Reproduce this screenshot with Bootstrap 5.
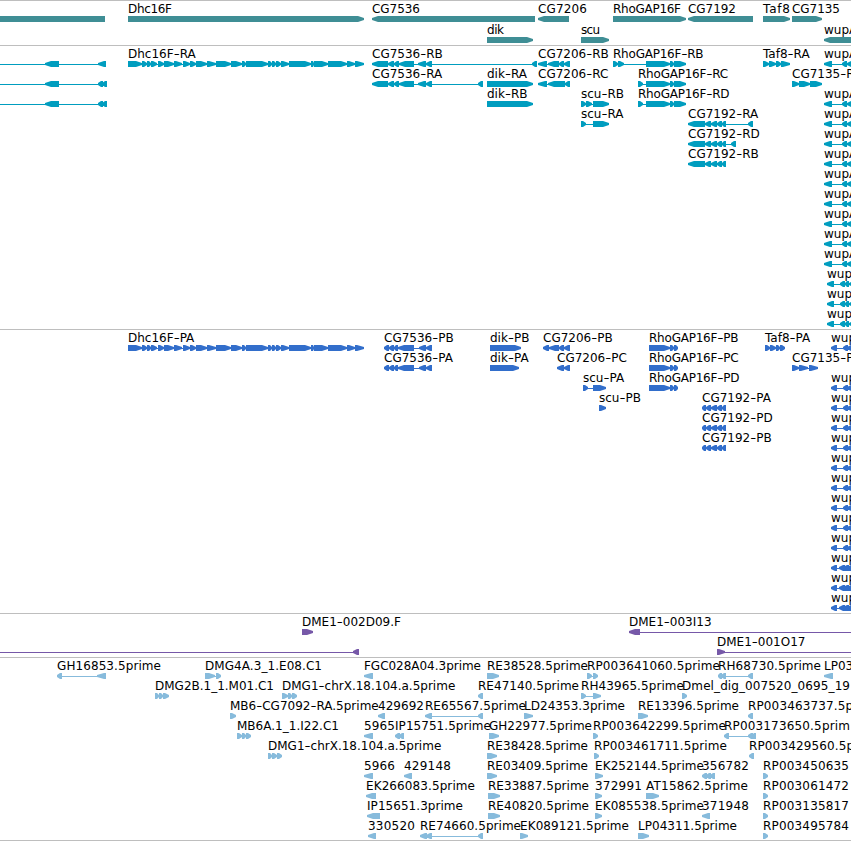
<!DOCTYPE html>
<html lang="en">
<head>
<meta charset="utf-8">
<meta name="viewport" content="width=device-width, initial-scale=1">
<title>Genome browser: region around Dhc16F</title>
<link href="https://cdn.jsdelivr.net/npm/bootstrap@5.3.0/dist/css/bootstrap.min.css" rel="stylesheet">
<style>
  body { background: #fff; }
  .browser { width: 851px; height: 841px; border-bottom: 1px solid #bebebe; }
  .track { border-top: 1px solid #bebebe; }
  .track svg { width: 851px; height: 100%; }
  .track text { font: 12px "DejaVu Sans", sans-serif; fill: #000; }
  .t-gene { height: 45px; color: #3f8e95; }
  .t-rna { height: 284px; color: #009dbf; }
  .t-cds { height: 284px; color: #326ecb; }
  .t-bac { height: 44px; color: #7658a8; }
  .t-est { height: 183px; color: #87bbdc; }
</style>
</head>
<body>
<main class="browser d-flex flex-column overflow-hidden">
  <section class="track t-gene flex-shrink-0" data-track="gene" data-pitch="21"></section>
  <section class="track t-rna flex-shrink-0" data-track="rna" data-pitch="20"></section>
  <section class="track t-cds flex-shrink-0" data-track="cds" data-pitch="20"></section>
  <section class="track t-bac flex-shrink-0" data-track="bac" data-pitch="20"></section>
  <section class="track t-est flex-shrink-0" data-track="est" data-pitch="20"></section>
</main>
<script src="https://cdn.jsdelivr.net/npm/bootstrap@5.3.0/dist/js/bootstrap.bundle.min.js"></script>
<script>
// One feature per line: row | strand | label | label width | blocks (start-end, "~" marks a plain block)
const dhc = '128-142 142-147 147-151 151-157 158-164 164-174 174-182 183-190 190-196 196-207 207-216 216-231 231-242 242-246 246-268 268-272 272-276 276-281 281-289 289-311 311-314 314-328 328-347 347-355 355-364';
const c75 = '372-388 388-394 394-399 399-414 418-426 426-432';
const rho = '646-670 670-674 674-686';
const c71 = '688-705 705-711 711-717 717-722 722-726';
const p75 = '384-389 389-394 394-398 398-414 419-426 426-432';
const p71 = '702-706 706-711 711-717 717-722 722-726';
const tracks = {
gene: `0|<||0|-20~105
0|>|Dhc16F|44|128-364
0|<|CG7536|48|372~535
0|<|CG7206|49|538-569
0|>|RhoGAP16F|68|613-686
0|<|CG7192|48|688-753
0|>|Taf8|27|763-790
0|>|CG7135|48|792-822
1|>|dik|17|487-533
1|>|scu|19|581-609
1|<|wupA1|0|824-870`,
rna: `0|<||0|-20-0 45-59 98-106
1|<||0|-20-0 45-59 98-103 102-107
2|<||0|-20-0 45-59 98-103 102-107
0|>|Dhc16F-RA|68|${dhc}
0|<|CG7536-RB|71|${c75} 532-537
1|<|CG7536-RA|73|${c75} 478-483
1|>|dik-RA|42|487-533
2|>|dik-RB|40|487-533
0|<|CG7206-RB|71|538-547 548-559 559-564 564-570
1|<|CG7206-RC|72|538-547 548-565 565-570
2|>|scu-RB|41|581-586 586-592 593-609
3|>|scu-RA|43|581-586 593-609
0|>|RhoGAP16F-RB|90|613-618 618-624 ${rho}
1|>|RhoGAP16F-RC|91|638-643 ${rho}
2|>|RhoGAP16F-RD|92|638-643 ${rho}
3|<|CG7192-RA|73|${c71} 748-753
4|<|CG7192-RD|73|${c71} 731-736
5|<|CG7192-RB|71|${c71}
0|>|Taf8-RA|51|763-769 769-776 776-781 781-790
1|>|CG7135-RA|0|792-799 799-810 810-822
${[0,2,3,4,5,6,7,8,9,10].map(r => r + '|<|wupA-RA|0|824-832 842-847 847-853').join('\n')}
${[11,12,13].map(r => r + '|<|wupA-RA|0|827-834 840-845 845-849 849-855').join('\n')}`,
cds: `0|>|Dhc16F-PA|67|${dhc}
0|<|CG7536-PB|70|${p75}
1|<|CG7536-PA|72|${p75}
0|>|dik-PB|39|490-521
1|>|dik-PA|41|490-519
0|<|CG7206-PB|70|543-549 549-559 559-564 564-570
1|<|CG7206-PC|71|557-564 564-570
2|>|scu-PA|42|583-588 593-606
3|>|scu-PB|40|599-606
0|>|RhoGAP16F-PB|89|649-670 670-674 674-678
1|>|RhoGAP16F-PC|90|649-670 670-674 674-678
2|>|RhoGAP16F-PD|91|649-670 670-674 674-678
3|<|CG7192-PA|72|${p71}
4|<|CG7192-PD|72|${p71}
5|<|CG7192-PB|70|${p71}
0|>|Taf8-PA|50|765-770 770-776 776-780 780-785
1|>|CG7135-PA|0|792-799 799-808 809-818
${[0,2,3,4,5,6,7,8,9,10].map(r => r + '|<|wupA-PA|0|831-837 843-848 847-853').join('\n')}
${[11,12,13].map(r => r + '|<|wupA-PA|0|831-837 839-845 843-849 847-853').join('\n')}`,
bac: `0|>|DME1-002D09.F|100|302-313
1|<||0|-20-0 353-359
0|<|DME1-003I13|84|629-640 860-870
1|>|DME1-001O17|90|717-725 860-870`,
est: `0|<|GH16853.5prime|104|57-62 97-106
0|>|DMG4A.3_1.E08.C1|117|205-215 216-221
0|<|FGC028A04.3prime|117|364-373
0|>|RE38528.5prime|101|487-499
0|>|RP003641060.5prime|133|587-592 593-598
0|<|RH68730.5prime|103|718-722 721-726 748-753
0|<|LP03|0|824-833
1|>|DMG2B.1_1.M01.C1|119|155-159 159-163 163-169
1|>|DMG1-chrX.18.104.a.5prime|174|282-288 288-292 292-297
1|<|RE47140.5prime|101|478-483
1|>|RH43965.5prime|103|581-586 593-601
1|>|Dmel_dig_007520_0695_19|168|682-687
2|>|MB6-CG7092-RA.5prime|150|230-236
2|<|429692|46|378-385
2|<|RE65567.5prime|101|425-432 478-483
2|>|LD24353.3prime|101|524-533
2|>|RE13396.5prime|101|638-648
2|<|RP003463737.5prime|133|748-753
3|>|MB6A.1_1.I22.C1|102|237-242 242-246 246-251
3|<|5965|31|364-373
3|<|IP15751.5prime|96|395-400 399-404
3|>|GH22977.5prime|103|489-499
3|>|RP003642299.5prime|133|593-598
3|<|RP003173650.5prim|126|724-729 748-753 752-756
4|>|DMG1-chrX.18.104.a.5prime|174|268-272 272-277 277-282
4|>|RE38428.5prime|101|487-497
4|>|RP003461711.5prime|133|594-599
4|<|RP003429560.5prime|133|749-754
5|<|5966|31|364-373
5|<|429148|47|404-412
5|>|RE03409.5prime|101|487-497
5|>|EK252144.5prime|109|595-603
5|<|356782|47|702-707 706-711 710-715
5|>|RP003450635|86|763-768
6|<|EK266083.5prime|109|366-376
6|>|RE33887.5prime|101|488-500
6|>|372991|47|595-602
6|>|AT15862.5prime|102|646-659
6|>|RP003061472|86|763-768
7|<|IP15651.3prime|96|367-380
7|>|RE40820.5prime|101|488-500
7|>|EK085538.5prime|109|595-602
7|<|371948|47|702-710
7|>|RP003135817|86|763-768
8|<|330520|47|368-376
8|<|RE74660.5prime|101|420-427 426-432 478-483
8|>|EK089121.5prime|109|520-528
8|>|LP04311.5prime|99|638-649
8|>|RP003495784|86|763-768`
};

// Path of one block; its tip points along the strand.
function block(a, b, y, strand, plain) {
  const t = b - a > 9 ? 8 : b - a;
  if (plain && a < 0) return `M${a} ${y}H${b}v6H${a}z`;
  return strand === '>'
    ? `M${a} ${y}H${b - t + 2}L${b} ${y + 2}v2L${b - t + 2} ${y + 6}H${a}z`
    : `M${b} ${y}H${a + t - 2}L${a} ${y + 2}v2L${a + t - 2} ${y + 6}H${b}z`;
}

document.querySelectorAll('[data-track]').forEach(section => {
  const pitch = +section.dataset.pitch;
  let shapes = '', labels = '';
  tracks[section.dataset.track].split('\n').forEach(line => {
    const [row, strand, label, width, spec] = line.split('|');
    const y = 15 + row * pitch;
    const blocks = spec.split(' ').map(s => {
      const m = s.match(/^(-?\d+)([-~])(\d+)$/);
      return [+m[1], +m[3], m[2] === '~'];
    });
    const first = blocks[0][0], last = blocks[blocks.length - 1][1];
    shapes += `<path d="${blocks.map(b => block(b[0], b[1], y, strand, b[2])).join('')}"/>`;
    if (blocks.length > 1) shapes += `<rect x="${first + 2}" y="${y + 3}" width="${last - first - 4}" height="1"/>`;
    if (label) {
      // Hyphens are drawn wide, six pixels each
      const dashed = label.includes('-');
      const fit = +width && !dashed ? ` textLength="${width}"` : '';
      const tight = label.startsWith('RhoGAP16F-') ? ' letter-spacing="-0.22"' : '';
      const body = label.replace(/-/g, '<tspan textLength="6" lengthAdjust="spacingAndGlyphs">-</tspan>');
      labels += `<text x="${first}" y="${y - 3}"${fit}${tight}>${body}</text>`;
    }
  });
  section.innerHTML = `<svg class="d-block" fill="currentColor" aria-label="${section.dataset.track} track">${shapes}${labels}</svg>`;
});
</script>
</body>
</html>
